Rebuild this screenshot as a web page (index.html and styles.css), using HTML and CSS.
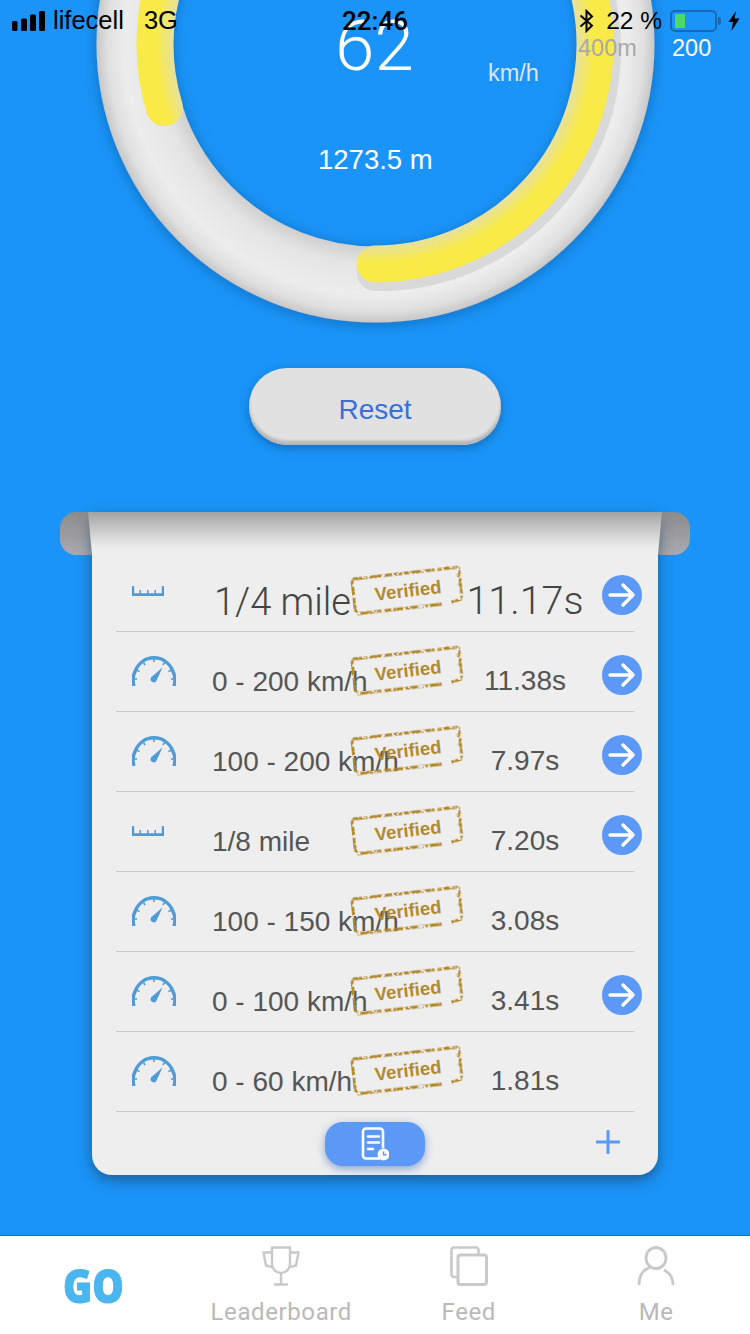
FILE: index.html
```html
<!DOCTYPE html>
<html lang="en">
<head>
    <meta charset="UTF-8">
    <meta name="viewport" content="width=device-width, initial-scale=1.0">
    <title>GO</title>
    <link rel="stylesheet" href="styles.css">
</head>
<body>
    <!-- shared icons -->
    <svg class="sprite" aria-hidden="true">
        <defs>
            <filter id="worn" filterUnits="userSpaceOnUse" x="0" y="0" width="112" height="40">
                <feTurbulence type="fractalNoise" baseFrequency="0.28" numOctaves="2" seed="7" result="noise"/>
                <feDisplacementMap in="SourceGraphic" in2="noise" scale="2" result="moved"/>
                <feColorMatrix in="noise" type="matrix" values="0 0 0 0 0  0 0 0 0 0  0 0 0 0 0  7 0 0 0 -2.500" result="holes"/>
                <feComposite in="moved" in2="holes" operator="in"/>
            </filter>
        </defs>
        <symbol id="ico-gauge" viewBox="0 0 44 30">
            <path d="M2 30 C.5 25 .8 20 3 15.500 C6.500 6.500 14 1.800 22 1.800 C30 1.800 37.500 6.500 41 15.500 C43.200 20 43.500 25 42 30" fill="none" stroke="currentColor" stroke-width="3.400"/>
            <path d="M22 3v3M11.500 6.500l1.600 2.600M32.500 6.500l-1.600 2.600M4.500 14l3 1.500M39.500 14l-3 1.500M2 23h3M42 23h-3" stroke="currentColor" stroke-width="1.500"/>
            <path d="M20 20.500 L30.500 11.500 L24.800 24 A3.200 3.200 0 1 1 20 20.500Z" fill="currentColor"/>
        </symbol>
        <symbol id="ico-ruler" viewBox="0 0 32 10">
            <path d="M0 0h2.200v7.200h5.300V4h1.500v3.200h6V4h1.500v3.200h6V4h1.500v3.200h5.800V0H32v10H0z" fill="currentColor"/>
        </symbol>
        <symbol id="ico-arrow" viewBox="0 0 40 40">
            <circle cx="20" cy="20" r="20" fill="#5c98f6"/>
            <path d="M8 20h23M21 10l10 10-10 10" fill="none" stroke="#fff" stroke-width="3.400" stroke-linecap="round" stroke-linejoin="round"/>
        </symbol>
        <symbol id="stamp-frame" viewBox="0 0 112 40">
            <g filter="url(#worn)">
                <path d="M3.500 2 H108.500 L110 3.500 V31 L108 34.500 L99 36" fill="none" stroke="#b08628" stroke-width="2.800"/>
                <path d="M89 37 H5 L2.500 34 V2" fill="none" stroke="#b08628" stroke-width="2.800"/>
            </g>
        </symbol>
    </svg>

    <div class="statusbar">
        <div class="status-left">
            <svg class="signal" width="33" height="20" viewBox="0 0 33 20">
                <rect x="0" y="10" width="5.500" height="10" rx="1.500"/>
                <rect x="9" y="7.500" width="6" height="12.500" rx="1.500"/>
                <rect x="18" y="3.500" width="6" height="16.500" rx="1.500"/>
                <rect x="27" y="0" width="6" height="20" rx="1.500"/>
            </svg>
            <span class="carrier">lifecell</span>
            <span class="network">3G</span>
        </div>
        <div class="status-time">22:46</div>
        <div class="status-right">
            <svg class="bt" width="15" height="24" viewBox="0 0 15 24">
                <path d="M1.500 6.500 L13 16.500 L7.500 22 V2 L13 7.500 L1.500 17.500" fill="none" stroke="#000" stroke-width="2"/>
            </svg>
            <span class="percent">22 %</span>
            <div class="battery"><div class="battery-level"></div></div>
            <div class="battery-tip"></div>
            <svg class="bolt" width="12" height="20" viewBox="0 0 12 20">
                <path d="M8 0 L0.500 11 H5 L3.500 20 L11.500 7.500 H6.500 Z" fill="#000"/>
            </svg>
        </div>
    </div>

    <main class="screen">
        <section class="gauge">
            <svg class="gauge-ring" width="750" height="340" viewBox="0 0 750 340">
                <defs>
                    <radialGradient id="ringFill" gradientUnits="userSpaceOnUse" cx="375.500" cy="43.500" r="279">
                        <stop offset="0.725" stop-color="#cfcfcf"/>
                        <stop offset="0.79" stop-color="#e4e4e4"/>
                        <stop offset="0.90" stop-color="#ededed"/>
                        <stop offset="0.96" stop-color="#e0e0e0"/>
                        <stop offset="1" stop-color="#c8c8c8"/>
                    </radialGradient>
                    <radialGradient id="yellowFill" gradientUnits="userSpaceOnUse" cx="375" cy="44" r="240">
                        <stop offset="0.84" stop-color="#e6e1a0"/>
                        <stop offset="0.91" stop-color="#f9ea48"/>
                        <stop offset="1" stop-color="#f9ea48"/>
                    </radialGradient>
                    <filter id="ringShadow" x="-10%" y="-20%" width="120%" height="140%">
                        <feDropShadow dx="0" dy="2" stdDeviation="7" flood-color="#0b4f8c" flood-opacity="0.55"/>
                    </filter>
                </defs>
                <circle cx="375.500" cy="43.500" r="241" fill="none" stroke="url(#ringFill)" stroke-width="76" filter="url(#ringShadow)"/>
                <path d="M375 273 A224 224 0 1 0 156 70" fill="none" stroke="#d9d9d9" stroke-width="36" stroke-linecap="round"/>
                <path d="M375 264 A220 220 0 1 0 164.400 107.600" fill="none" stroke="url(#yellowFill)" stroke-width="37" stroke-linecap="round"/>
            </svg>
            <div class="speed">62</div>
            <div class="speed-unit">km/h</div>
            <div class="distance">1273.5 m</div>
            <div class="mark-400">400m</div>
            <div class="mark-200">200</div>
        </section>

        <button class="reset-btn">Reset</button>

        <section class="sheet">
            <div class="sheet-roll"></div>
            <div class="sheet-fold"></div>

            <div class="row row-big">
                <svg class="ruler"><use href="#ico-ruler"/></svg>
                <div class="label">1/4 mile</div>
                <div class="time">11.17s</div>
                <svg class="go-arrow"><use href="#ico-arrow"/></svg>
                <div class="stamp"><svg class="stamp-svg"><use href="#stamp-frame"/></svg><span class="stamp-text">Verified</span></div>
            </div>
            <div class="row">
                <svg class="speedo"><use href="#ico-gauge"/></svg>
                <div class="label">0 - 200 km/h</div>
                <div class="time">11.38s</div>
                <svg class="go-arrow"><use href="#ico-arrow"/></svg>
                <div class="stamp"><svg class="stamp-svg"><use href="#stamp-frame"/></svg><span class="stamp-text">Verified</span></div>
            </div>
            <div class="row">
                <svg class="speedo"><use href="#ico-gauge"/></svg>
                <div class="label">100 - 200 km/h</div>
                <div class="time">7.97s</div>
                <svg class="go-arrow"><use href="#ico-arrow"/></svg>
                <div class="stamp"><svg class="stamp-svg"><use href="#stamp-frame"/></svg><span class="stamp-text">Verified</span></div>
            </div>
            <div class="row">
                <svg class="ruler"><use href="#ico-ruler"/></svg>
                <div class="label">1/8 mile</div>
                <div class="time">7.20s</div>
                <svg class="go-arrow"><use href="#ico-arrow"/></svg>
                <div class="stamp"><svg class="stamp-svg"><use href="#stamp-frame"/></svg><span class="stamp-text">Verified</span></div>
            </div>
            <div class="row">
                <svg class="speedo"><use href="#ico-gauge"/></svg>
                <div class="label">100 - 150 km/h</div>
                <div class="time">3.08s</div>
                <div class="stamp"><svg class="stamp-svg"><use href="#stamp-frame"/></svg><span class="stamp-text">Verified</span></div>
            </div>
            <div class="row">
                <svg class="speedo"><use href="#ico-gauge"/></svg>
                <div class="label">0 - 100 km/h</div>
                <div class="time">3.41s</div>
                <svg class="go-arrow"><use href="#ico-arrow"/></svg>
                <div class="stamp"><svg class="stamp-svg"><use href="#stamp-frame"/></svg><span class="stamp-text">Verified</span></div>
            </div>
            <div class="row">
                <svg class="speedo"><use href="#ico-gauge"/></svg>
                <div class="label">0 - 60 km/h</div>
                <div class="time">1.81s</div>
                <div class="stamp"><svg class="stamp-svg"><use href="#stamp-frame"/></svg><span class="stamp-text">Verified</span></div>
            </div>

            <div class="sheet-footer">
                <div class="history-btn">
                    <svg width="28" height="34" viewBox="0 0 28 34">
                        <path d="M19 31.500H5 A3 3 0 0 1 2 28.500V4.500 A3 3 0 0 1 5 1.500H19 A3 3 0 0 1 22 4.500V21" fill="none" stroke="#fff" stroke-width="2.600"/>
                        <path d="M7 9.500h11M7 15.500h11M7 22h5" stroke="#fff" stroke-width="2.600" stroke-linecap="round"/>
                        <circle cx="22.500" cy="27.500" r="6" fill="#fff"/>
                        <path d="M22.500 24.500v3.300h3" fill="none" stroke="#5c98f6" stroke-width="1.500"/>
                    </svg>
                </div>
                <svg class="plus" width="24" height="24" viewBox="0 0 24 24">
                    <path d="M12 1v22M1 12h22" stroke="#5c98f6" stroke-width="3" stroke-linecap="round"/>
                </svg>
            </div>
        </section>
    </main>

    <nav class="tabbar">
        <div class="tab tab-go"><span class="go-text">GO</span></div>
        <div class="tab">
            <svg width="38" height="40" viewBox="0 0 38 40">
                <path d="M10 1.500H28V18 A9 9 0 0 1 10 18Z M10 6.500H1.500L4 19.500 L10 21 M28 6.500H36.500L34 19.500 L28 21 M19 27V38 M12 38.500H26" fill="none" stroke="#c9c9c9" stroke-width="2.400"/>
            </svg>
            <span class="tab-label">Leaderboard</span>
        </div>
        <div class="tab">
            <svg width="38" height="40" viewBox="0 0 38 40">
                <path d="M7 31H4 A2.500 2.500 0 0 1 1.500 28.500V4 A2.500 2.500 0 0 1 4 1.500H26 A2.500 2.500 0 0 1 28.500 4V8" fill="none" stroke="#c9c9c9" stroke-width="2.600"/>
                <rect x="8" y="9" width="28.500" height="29.500" rx="2.500" fill="none" stroke="#c9c9c9" stroke-width="3"/>
            </svg>
            <span class="tab-label">Feed</span>
        </div>
        <div class="tab">
            <svg width="38" height="40" viewBox="0 0 38 40">
                <ellipse cx="19" cy="12" rx="10" ry="10.500" fill="none" stroke="#c9c9c9" stroke-width="2.800"/>
                <path d="M2 39 C2 30 6 24 12.500 21.500 M27 24 C33 27 36 32 36 39" fill="none" stroke="#c9c9c9" stroke-width="2.800"/>
            </svg>
            <span class="tab-label">Me</span>
        </div>
    </nav>
</body>
</html>
```

FILE: styles.css
```css
html, body {
    margin: 0;
    padding: 0;
}
body {
    position: relative;
    width: 750px;
    height: 1334px;
    overflow: hidden;
    background-color: #1a94f8;
    font-family: 'Liberation Sans', Arial, sans-serif;
    color: #555;
}
.sprite {
    position: absolute;
    width: 0;
    height: 0;
}

/* status bar */
.statusbar {
    position: absolute;
    top: 0;
    left: 0;
    right: 0;
    z-index: 5;
    height: 41px;
    display: grid;
    grid-template-columns: 1fr auto 1fr;
    align-items: center;
    color: #000;
    font-size: 25.500px;
}
.status-left {
    display: flex;
    align-items: center;
    padding-left: 12px;
}
.signal {
    fill: #000;
    margin-right: 8px;
}
.network {
    margin-left: 20px;
}
.status-time {
    font-family: Roboto, sans-serif;
    font-weight: 500;
    font-size: 26px;
}
.status-right {
    display: flex;
    align-items: center;
    justify-content: flex-end;
    padding-right: 10px;
}
.percent {
    margin-left: 12px;
    margin-right: 8px;
    font-size: 24.500px;
    white-space: nowrap;
}
.battery {
    box-sizing: border-box;
    width: 47px;
    height: 22px;
    padding: 2px 3px;
    border: 2px solid #1769b2;
    border-radius: 5px;
}
.battery-level {
    width: 10px;
    height: 100%;
    background-color: #4cd964;
}
.battery-tip {
    width: 3px;
    height: 8px;
    margin-left: 1px;
    margin-right: 7px;
    background-color: #1769b2;
    border-radius: 0 3px 3px 0;
}

/* main column */
.screen {
    height: 1235px;
    display: flex;
    flex-direction: column;
    align-items: center;
}

/* gauge */
.gauge {
    position: relative;
    width: 750px;
    height: 323px;
    flex: none;
}
.gauge-ring {
    display: block;
}
.speed,
.speed-unit,
.distance,
.mark-400,
.mark-200 {
    position: absolute;
    line-height: 1;
    white-space: nowrap;
}
.speed {
    top: 10px;
    left: 335px;
    font-family: Roboto, sans-serif;
    font-weight: 300;
    font-size: 71px;
    color: #fff;
}
.speed-unit {
    top: 62px;
    left: 488px;
    font-size: 23.500px;
    color: #dfe6ee;
}
.distance {
    top: 146px;
    left: 318px;
    font-size: 27.500px;
    color: #fff;
}
.mark-400 {
    top: 37px;
    left: 578px;
    font-size: 23.500px;
    color: #a9a9a9;
}
.mark-200 {
    top: 37px;
    left: 672px;
    font-size: 23.500px;
    color: #fff;
}

/* reset */
.reset-btn {
    flex: none;
    width: 252px;
    height: 77px;
    margin-top: 45px;
    padding: 7px 0 0;
    border: none;
    border-radius: 38px;
    background-color: #e1e1e1;
    box-shadow: inset 0 -4px 3px #b5b5b5, 0 3px 10px rgba(10, 60, 110, 0.45);
    color: #3a6fd8;
    font-family: inherit;
    font-size: 28px;
}

/* results sheet */
.sheet {
    position: relative;
    flex: none;
    box-sizing: border-box;
    width: 566px;
    height: 663px;
    margin-top: 67px;
    padding-top: 40px;
    background-color: #eeeeee;
    border-radius: 0 0 20px 20px;
    box-shadow: 0 5px 14px rgba(30, 70, 110, 0.7);
}
.sheet-roll {
    position: absolute;
    z-index: -1;
    top: 0;
    left: -32px;
    right: -32px;
    height: 43px;
    border-radius: 16px;
    background: linear-gradient(#8c8c8c, #a9a9b0);
}
.sheet-fold {
    position: absolute;
    top: 0;
    left: -4px;
    right: -4px;
    height: 43px;
    background: linear-gradient(#a2a2a2, #d2d2d2 50%, #eeeeee 85%);
    clip-path: polygon(0 0, 100% 0, 99.300% 100%, 0.700% 100%);
}
.row {
    position: relative;
    box-sizing: border-box;
    width: 518px;
    height: 80px;
    margin-left: 24px;
    border-bottom: 1px solid #c9c9c9;
    display: grid;
    grid-template-columns: 96px 244px 138px 40px;
    column-gap: 0;
    align-items: center;
}
.speedo {
    width: 44px;
    height: 30px;
    margin-left: 16px;
    margin-top: -2px;
    color: #4f9ad8;
}
.ruler {
    width: 32px;
    height: 10px;
    margin-left: 16px;
    margin-top: -2px;
    color: #4f9ad8;
}
.label {
    margin-top: 20px;
    font-size: 28px;
    white-space: nowrap;
}
.time {
    margin-top: 18px;
    grid-column: 3;
    text-align: center;
    font-size: 28px;
}
.go-arrow {
    grid-column: 4;
    width: 40px;
    height: 40px;
    margin-top: 6px;
    margin-left: 8px;
}
.row-big .label {
    margin-left: 2px;
    font-family: Roboto, sans-serif;
    font-weight: 300;
    font-size: 38px;
    color: #444;
}
.row-big .time {
    margin-top: 18px;
    font-family: Roboto, sans-serif;
    font-weight: 300;
    font-size: 39.500px;
    color: #444;
}
.stamp {
    position: absolute;
    top: 19px;
    left: 235px;
    width: 112px;
    height: 40px;
    display: flex;
    align-items: center;
    justify-content: center;
    transform: rotate(-6.500deg);
}
.stamp-svg {
    position: absolute;
    top: 0;
    left: 0;
    width: 112px;
    height: 40px;
}
.stamp-text {
    margin-left: 2px;
    color: #b38a30;
    font-size: 18.500px;
    font-weight: bold;
}
.sheet-footer {
    display: grid;
    grid-template-columns: 1fr 100px 1fr;
    padding-top: 10px;
}
.history-btn {
    grid-column: 2;
    width: 100px;
    height: 44px;
    border-radius: 18px;
    background-color: #5c98f6;
    box-shadow: 0 3px 8px rgba(40, 90, 180, 0.5);
    display: flex;
    align-items: center;
    justify-content: center;
}
.plus {
    justify-self: end;
    margin-top: 8px;
    margin-right: 38px;
}

/* bottom tabs */
.tabbar {
    box-sizing: border-box;
    height: 99px;
    border-top: 1px solid #0f6fc0;
    background-color: #fff;
    display: grid;
    grid-template-columns: repeat(4, 187.500px);
}
.tab {
    display: flex;
    flex-direction: column;
    align-items: center;
    padding-top: 10px;
}
.tab svg {
    display: block;
}
.tab-go {
    padding-top: 18px;
    color: #4ab5ee;
    font-family: 'Open Sans', sans-serif;
    font-weight: 800;
    font-size: 46px;
    line-height: 62px;
}
.go-text {
    transform: scaleX(0.86);
    -webkit-text-stroke: 1px #4ab5ee;
}
.tab-label {
    margin-top: 12px;
    font-family: Roboto, sans-serif;
    font-size: 24px;
    letter-spacing: 0.600px;
    color: #b9b9b9;
}
```
